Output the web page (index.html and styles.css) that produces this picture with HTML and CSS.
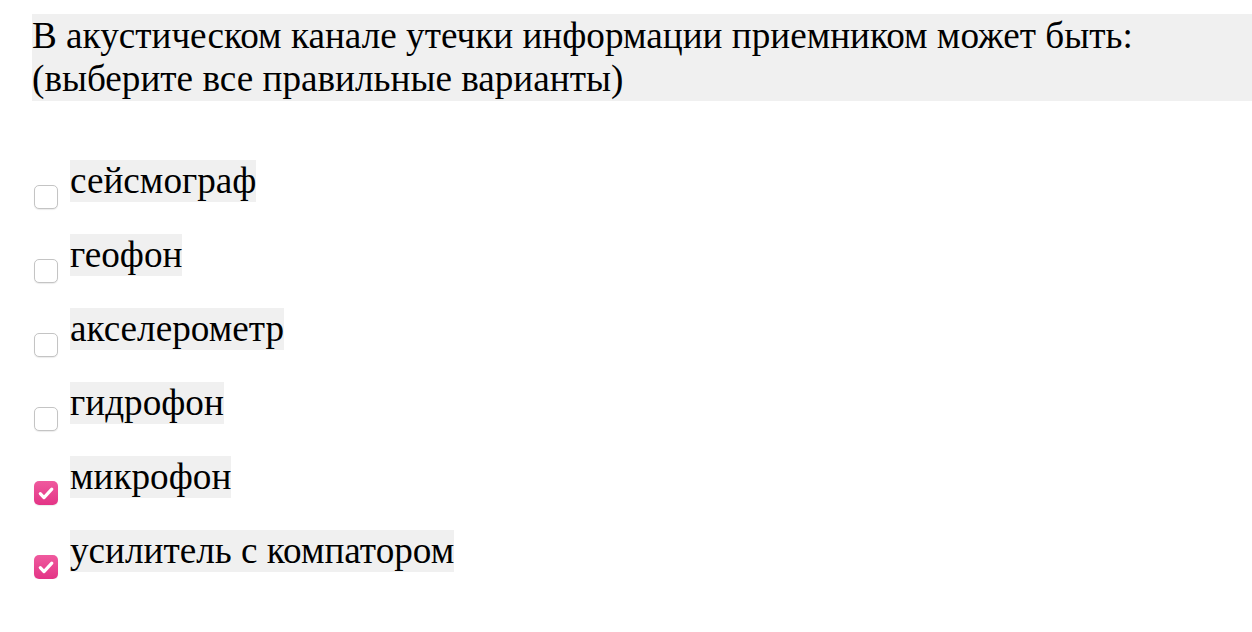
FILE: index.html
```html
<!DOCTYPE html>
<html lang="ru">
<head>
<meta charset="utf-8">
<link rel="stylesheet" href="styles.css">
</head>
<body>
<div class="question">В акустическом канале утечки информации приемником может быть:<br>(выберите все правильные варианты)</div>
<div class="options">
  <div class="option"><span class="box"></span><span class="label">сейсмограф</span></div>
  <div class="option"><span class="box"></span><span class="label">геофон</span></div>
  <div class="option"><span class="box"></span><span class="label">акселерометр</span></div>
  <div class="option"><span class="box"></span><span class="label">гидрофон</span></div>
  <div class="option"><span class="box checked"><svg viewBox="0 0 24 24" width="24" height="24"><path d="M6.3 12.6 L10 16.6 L17.8 8.2" fill="none" stroke="#fff" stroke-width="3.2" stroke-linecap="round" stroke-linejoin="round"/></svg></span><span class="label">микрофон</span></div>
  <div class="option"><span class="box checked"><svg viewBox="0 0 24 24" width="24" height="24"><path d="M6.3 12.6 L10 16.6 L17.8 8.2" fill="none" stroke="#fff" stroke-width="3.2" stroke-linecap="round" stroke-linejoin="round"/></svg></span><span class="label">усилитель с компатором</span></div>
</div>
</body>
</html>
```
FILE: styles.css
```css
html, body {
  margin: 0;
  padding: 0;
  background: #fff;
}
body {
  font-family: "Liberation Serif", "Times New Roman", serif;
  font-size: 37.2px;
  color: #000;
  padding: 14px 0 0 32px;
}
.question {
  background: #f0f0f0;
  height: 87px;
  line-height: 43px;
}
.options {
  display: flex;
  flex-direction: column;
  gap: 25px;
  margin-top: 59px;
}
.option {
  display: flex;
  align-items: flex-start;
}
.box {
  box-sizing: border-box;
  flex: none;
  width: 24px;
  height: 24px;
  margin: 25px 12px 0 2px;
  border: 1px solid #c4c4c4;
  border-radius: 5px;
  background: #fff;
  box-shadow: 0 1px 1px rgba(0,0,0,0.08);
  display: flex;
}
.box.checked {
  border: none;
  background: linear-gradient(#ef5a9e, #e33486);
}
.box svg {
  display: block;
}
.label {
  background: #f0f0f0;
  line-height: 42px;
  height: 42px;
}
```
